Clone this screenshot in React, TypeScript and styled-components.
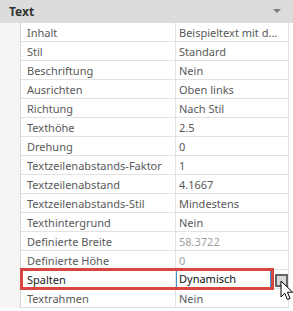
import React from "react";
import styled, { createGlobalStyle } from "styled-components";

const GlobalStyle = createGlobalStyle`
  body {
    margin: 0;
    background: #ffffff;
    font-family: "Noto Sans", "Open Sans", sans-serif;
  }
`;

const Panel = styled.div`
  width: 293px;
  height: 311px;
  overflow: hidden;
  background: #ffffff;
`;

const Header = styled.div`
  height: 23px;
  display: flex;
  align-items: center;
  justify-content: space-between;
  padding: 0 9px 0 9px;
  background: #dcdcdc;
  box-sizing: border-box;
`;

const HeaderTitle = styled.span`
  font-size: 12px;
  font-weight: 700;
  color: #333333;
`;

const Chevron = styled.span`
  width: 0;
  height: 0;
  border-left: 4px solid transparent;
  border-right: 4px solid transparent;
  border-top: 4px solid #7a7a7a;
  margin-right: 3px;
  margin-top: -2px;
`;

const Body = styled.div`
  display: flex;
`;

const Gutter = styled.div`
  width: 20px;
  flex: none;
  background: #f4f4f4;
  border-right: 1px solid #d6d6d6;
`;

const Grid = styled.div`
  width: 267px;
  display: grid;
  grid-template-columns: 155px 1fr;
  border-right: 1px solid #e2e2e2;
`;

const Row = styled.div`
  display: contents;
`;

const Cell = styled.div<{ $value?: boolean; $muted?: boolean; $strong?: boolean }>`
  height: 19px;
  box-sizing: border-box;
  border-bottom: 1px solid #e2e2e2;
  border-right: ${(p) => (p.$value ? "none" : "1px solid #e2e2e2")};
  padding-left: ${(p) => (p.$value ? "3px" : "6px")};
  padding-top: 1px;
  font-size: 11px;
  line-height: 17px;
  white-space: nowrap;
  overflow: visible;
  color: ${(p) => (p.$muted ? "#a0a0a0" : p.$strong ? "#1a1a1a" : "#595959")};
  position: relative;
  z-index: ${(p) => (p.$value ? 1 : 2)};
  background: ${(p) => (p.$value ? "#ffffff" : "transparent")};
`;

const HighlightRow = styled.div`
  grid-column: 1 / -1;
  position: relative;
  display: grid;
  grid-template-columns: 155px 1fr;
`;

const Marker = styled.div`
  position: absolute;
  left: -1px;
  top: -2px;
  width: 254px;
  height: 22px;
  border: 3px solid #d8473f;
  box-sizing: border-box;
  z-index: 3;
  pointer-events: none;
`;

const EditCell = styled.div`
  height: 19px;
  box-sizing: border-box;
  border-bottom: 1px solid #e2e2e2;
  display: flex;
  align-items: flex-start;
  gap: 4px;
  position: relative;
`;

const Input = styled.div`
  width: 95px;
  height: 18px;
  box-sizing: border-box;
  border: 1px solid #3d8fd6;
  background: #ffffff;
  font-size: 11px;
  line-height: 16px;
  padding-left: 2px;
  color: #111111;
`;

const SmallButton = styled.div`
  width: 13px;
  height: 13px;
  box-sizing: border-box;
  border: 2px solid #666666;
  background: #d9d9d9;
  margin-top: 4px;
`;

const Cursor = styled.svg`
  position: absolute;
  left: 104px;
  top: 10px;
  z-index: 4;
`;

const rows: { label: string; value: string; muted?: boolean }[] = [
  { label: "Inhalt", value: "Beispieltext mit d..." },
  { label: "Stil", value: "Standard" },
  { label: "Beschriftung", value: "Nein" },
  { label: "Ausrichten", value: "Oben links" },
  { label: "Richtung", value: "Nach Stil" },
  { label: "Texthöhe", value: "2.5" },
  { label: "Drehung", value: "0" },
  { label: "Textzeilenabstands-Faktor", value: "1" },
  { label: "Textzeilenabstand", value: "4.1667" },
  { label: "Textzeilenabstands-Stil", value: "Mindestens" },
  { label: "Texthintergrund", value: "Nein" },
  { label: "Definierte Breite", value: "58.3722", muted: true },
  { label: "Definierte Höhe", value: "0", muted: true },
];

export default function App() {
  return (
    <Panel>
      <GlobalStyle />
      <Header>
        <HeaderTitle>Text</HeaderTitle>
        <Chevron />
      </Header>
      <Body>
        <Gutter />
        <Grid>
          {rows.map((r) => (
            <Row key={r.label}>
              <Cell>{r.label}</Cell>
              <Cell $value $muted={r.muted}>
                {r.value}
              </Cell>
            </Row>
          ))}
          <HighlightRow>
            <Marker />
            <Cell $strong>Spalten</Cell>
            <EditCell>
              <Input>Dynamisch</Input>
              <SmallButton />
              <Cursor width="14" height="21" viewBox="0 0 14 21">
                <path
                  d="M1 1 L1 17 L4.8 13.2 L7.4 19.5 L10 18.4 L7.4 12.2 L12.6 12.2 Z"
                  fill="#ffffff"
                  stroke="#000000"
                  strokeWidth="1"
                  strokeLinejoin="miter"
                />
              </Cursor>
            </EditCell>
          </HighlightRow>
          <Row>
            <Cell>Textrahmen</Cell>
            <Cell $value>Nein</Cell>
          </Row>
        </Grid>
      </Body>
    </Panel>
  );
}
